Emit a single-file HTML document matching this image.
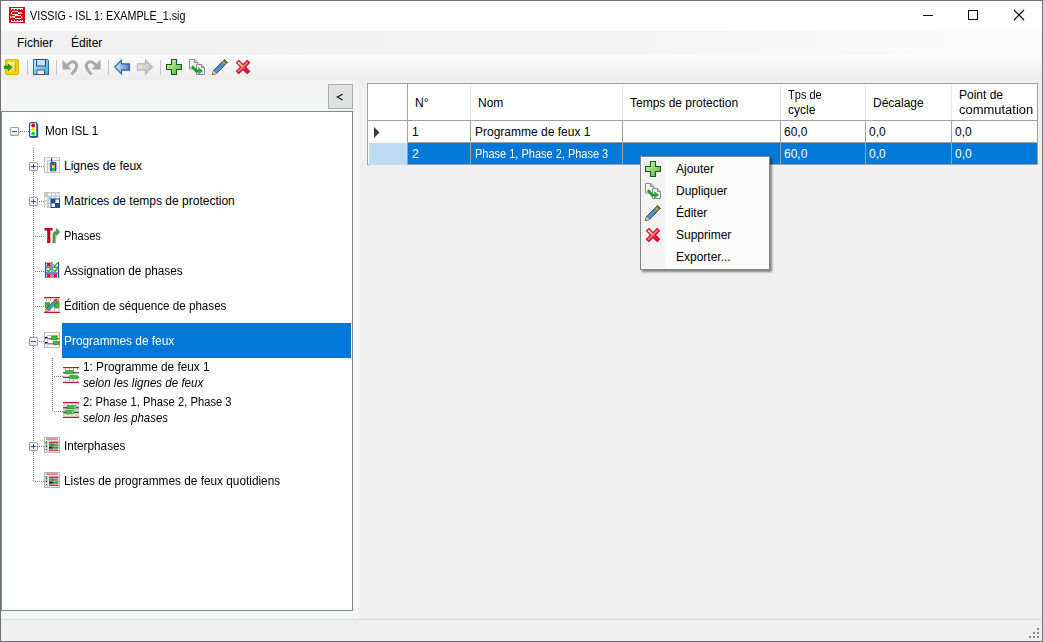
<!DOCTYPE html>
<html><head><meta charset="utf-8">
<style>
*{margin:0;padding:0;box-sizing:border-box}
html,body{width:1043px;height:642px;overflow:hidden;background:#f0f0f0}
body{position:relative;font-family:"Liberation Sans",sans-serif;font-size:12px;color:#000}
.a{position:absolute}
.t{position:absolute;white-space:nowrap;line-height:14px}
svg{position:absolute;overflow:visible}
#win{left:0;top:0;width:1043px;height:642px;border:1px solid #707070}
#title{left:1px;top:1px;width:1041px;height:30px;background:#fff}
#menu{left:1px;top:31px;width:1041px;height:24px;background:linear-gradient(to right,#f0f0f0,#f4f4f4 55%,#fbfbfb)}
#tool{left:1px;top:55px;width:1041px;height:25px;background:linear-gradient(#fbfbfb,#ededed)}
#leftbg{left:1px;top:80px;width:357px;height:539px;background:#f5f5f5}
#tree{left:1px;top:111px;width:352px;height:500px;background:#fff;border:1px solid #828790}
#status{left:1px;top:619px;width:1041px;height:22px;background:#f0f0f0;border-top:1px solid #dadada}
#btn{left:328px;top:84px;width:25px;height:25px;background:#e1e1e1;border:1px solid #adadad}
#grid{left:367px;top:83px;width:671px;height:82px;border:1px solid #a0a0a0;background:#fff}
.vd{position:absolute;width:1px;background:repeating-linear-gradient(to bottom,#7c7c7c 0 1px,transparent 1px 2px)}
.hd{position:absolute;height:1px;background:repeating-linear-gradient(to right,#7c7c7c 0 1px,transparent 1px 2px)}
.box{position:absolute;width:9px;height:9px;border:1px solid #a0a0a0;border-radius:1px;background:linear-gradient(#fff,#e6e6e6)}
.box:before{content:"";position:absolute;left:1px;top:3px;width:5px;height:1px;background:#3a56a0}
.box.p:after{content:"";position:absolute;left:3px;top:1px;width:1px;height:5px;background:#3a56a0}
.gl{position:absolute;background:#a0a0a0}
.hl{position:absolute;background:#e5e5e5}
.sel{color:#fff}
</style></head><body>
<div class="a" id="title"></div>
<div class="a" id="menu"></div>
<div class="a" id="tool"></div>
<div class="a" id="leftbg"></div>
<div class="a" id="tree"></div>
<div class="a" id="status"></div>
<div class="a" id="btn"></div>
<div class="a" id="grid"></div>


<svg width="0" height="0" style="position:absolute">
<defs>
<linearGradient id="pg" x1="0" y1="0" x2="1" y2="1"><stop offset="0" stop-color="#f0f8a0"/><stop offset="1" stop-color="#40b050"/></linearGradient>
<linearGradient id="xg" x1="0" y1="0" x2="1" y2="1"><stop offset="0" stop-color="#fff6f2"/><stop offset=".42" stop-color="#f4a8a0"/><stop offset=".6" stop-color="#e83040"/><stop offset="1" stop-color="#d4001c"/></linearGradient>
<linearGradient id="dupg" x1="0" y1="0" x2="0" y2="1"><stop offset="0" stop-color="#3cb43c"/><stop offset="1" stop-color="#138a22"/></linearGradient>
<symbol id="iplus" viewBox="0 0 16 16"><path d="M5.5 .5h5v5h5v5h-5v5h-5v-5h-5v-5h5z" fill="url(#pg)" stroke="#0c6414" stroke-width="1.1"/></symbol>
<symbol id="ix" viewBox="0 0 16 16"><path d="M1.5 3.8L3.8 1.5 8 5.7 12.2 1.5 14.5 3.8 10.3 8 14.5 12.2 12.2 14.5 8 10.3 3.8 14.5 1.5 12.2 5.7 8z" fill="url(#xg)" stroke="#d00020" stroke-width="1.1"/></symbol>
<symbol id="ipen" viewBox="0 0 16 16">
<path d="M12.6 .6l2.8 2.8L4.2 14.6 0.5 15.5 1.4 11.8z" fill="#3a98d8" stroke="#6a2a10" stroke-width="1"/>
<path d="M12.6 .6l2.8 2.8-1.4 1.4-2.8-2.8z" fill="#2f9a3a"/>
<path d="M11.2 2l2.8 2.8-1 1-2.8-2.8z" fill="#f09020"/>
<path d="M1.4 11.8l2.8 2.8-3.7.9z" fill="#f0d080"/>
<path d="M.5 15.5l1-.3-.7-.7z" fill="#3a1a00"/>
</symbol>
<symbol id="idup" viewBox="0 0 16 16">
<path d="M.5 .5h5.5l3 3v6.5H.5z" fill="#f2f2f2" stroke="#8a8a92" stroke-width="1"/>
<path d="M5.5 .5v3h3" fill="#c8c8d8" stroke="#8a8a92" stroke-width="1"/>
<path d="M7.5 5.5h5l3 3v7H7.5z" fill="#ececec" stroke="#8a8a92" stroke-width="1"/>
<path d="M12.5 5.5v3h3" fill="#c8c8d8" stroke="#8a8a92" stroke-width="1"/>
<path d="M3 7.2L7.2 12.2H10" stroke="#1f9a2a" stroke-width="2.8" fill="none"/>
<path d="M9.3 8.3L14 12 9.3 15.6z" fill="#2aa834"/>
</symbol>
</defs></svg>
<!-- title -->
<svg style="left:9px;top:7px" width="16" height="16" viewBox="0 0 16 16" shape-rendering="crispEdges">
<rect x="0" y="0" width="16" height="16" fill="#e0000e"/>
<g fill="#fff"><rect x="2" y="1" width="12" height="1"/><rect x="2" y="2" width="1" height="1"/><rect x="5" y="2" width="1" height="1"/><rect x="8" y="2" width="1" height="1"/><rect x="11" y="2" width="1" height="1"/><rect x="13" y="2" width="1" height="1"/>
<rect x="2" y="14" width="12" height="1"/><rect x="2" y="13" width="1" height="1"/><rect x="5" y="13" width="1" height="1"/><rect x="8" y="13" width="1" height="1"/><rect x="11" y="13" width="1" height="1"/><rect x="13" y="13" width="1" height="1"/></g>
<rect x="10" y="5" width="3" height="2" fill="#f4a8ac"/>
<rect x="1" y="9" width="4" height="2" fill="#f4a8ac"/>
<g fill="#fff"><rect x="3" y="4" width="6" height="1"/><rect x="3" y="7" width="6" height="1"/><rect x="2" y="5" width="1" height="2"/><rect x="9" y="5" width="1" height="2"/>
<rect x="6" y="8" width="6" height="1"/><rect x="6" y="11" width="6" height="1"/><rect x="5" y="9" width="1" height="2"/><rect x="12" y="9" width="1" height="2"/></g>
</svg>
<div class="t" style="left:30px;top:9px;transform:scaleX(.895);transform-origin:0 0">VISSIG - ISL 1: EXAMPLE_1.sig</div>
<!-- window controls -->
<div class="a" style="left:923px;top:15px;width:10px;height:1px;background:#000"></div>
<div class="a" style="left:968px;top:10px;width:10px;height:10px;border:1px solid #000"></div>
<svg style="left:1014px;top:10px" width="10" height="10" viewBox="0 0 10 10"><path d="M0 0L10 10M10 0L0 10" stroke="#000" stroke-width="1.1"/></svg>

<!-- menu -->
<div class="t" style="left:17px;top:36px">Fichier</div>
<div class="t" style="left:71px;top:36px">Éditer</div>


<!-- toolbar -->
<svg style="left:4px;top:59px" width="16" height="16" viewBox="0 0 16 16">
<defs><linearGradient id="dg" x1="0" y1="0" x2="1" y2="1"><stop offset="0" stop-color="#fffbe0"/><stop offset="1" stop-color="#f0c800"/></linearGradient>
<linearGradient id="ga" x1="0" y1="0" x2="0" y2="1"><stop offset="0" stop-color="#4cb84c"/><stop offset="1" stop-color="#0a7a1a"/></linearGradient></defs>
<rect x="1.5" y="0.5" width="13" height="15" rx="1.5" fill="#f7d300" stroke="#d8b400" stroke-width="1"/>
<rect x="4" y="3" width="7.5" height="9.7" fill="url(#dg)"/>
<rect x="11" y="3" width="1.2" height="9.7" fill="#b8a860"/>
<path d="M.3 7H4.4V4.9L8 8.3 4.4 11.7V9.6H.3z" fill="#1f9a2a" stroke="#0b6a18" stroke-width=".6"/>
</svg>
<div class="a" style="left:27px;top:60px;width:1px;height:15px;background:#c5c5c5"></div>
<svg style="left:33px;top:59px" width="16" height="16" viewBox="0 0 16 16">
<defs><linearGradient id="fl" x1="0" y1="0" x2="1" y2="1"><stop offset="0" stop-color="#d6f0fc"/><stop offset="1" stop-color="#2aa4e4"/></linearGradient></defs>
<path d="M.5 .5h14l1 1v14H.5z" fill="url(#fl)" stroke="#1b6fb8" stroke-width="1"/>
<rect x="3.5" y="0.5" width="9" height="6.5" fill="#c4e2f4" stroke="#1a4c94" stroke-width="1"/>
<rect x="4" y="11" width="7.5" height="4.5" fill="#e8eef0" stroke="#555" stroke-width="1"/>
<rect x="0.5" y="15" width="15" height="1" fill="#565656"/>
</svg>
<div class="a" style="left:56px;top:60px;width:1px;height:15px;background:#c5c5c5"></div>
<svg style="left:62px;top:59px" width="16" height="16" viewBox="0 0 16 16"><path d="M.5 .5V10.5H9.5Z" fill="#a9a9a9"/><path d="M4 7.5C6.5 3.5 10.5 1.5 13.2 3.6 15.8 5.8 15.2 9.5 9.5 15.5" fill="none" stroke="#a9a9a9" stroke-width="3"/></svg>
<svg style="left:85px;top:59px" width="16" height="16" viewBox="0 0 16 16"><g transform="translate(16 0) scale(-1 1)"><path d="M.5 .5V10.5H9.5Z" fill="#a9a9a9"/><path d="M4 7.5C6.5 3.5 10.5 1.5 13.2 3.6 15.8 5.8 15.2 9.5 9.5 15.5" fill="none" stroke="#a9a9a9" stroke-width="3"/></g></svg>
<div class="a" style="left:108px;top:60px;width:1px;height:15px;background:#c5c5c5"></div>
<svg style="left:114px;top:59px" width="16" height="16" viewBox="0 0 16 16">
<defs><linearGradient id="la" x1="0" y1="0" x2="1" y2="0"><stop offset="0" stop-color="#e8f0fa"/><stop offset="1" stop-color="#4a78c0"/></linearGradient></defs>
<path d="M.7 8L7.5 1v3.9h8v6.2h-8V15z" fill="url(#la)" stroke="#2a62a4" stroke-width="1.1" stroke-linejoin="miter"/>
</svg>
<svg style="left:137px;top:59px" width="16" height="16" viewBox="0 0 16 16">
<defs><linearGradient id="ra" x1="0" y1="0" x2="1" y2="0"><stop offset="0" stop-color="#e6e6e6"/><stop offset="1" stop-color="#c4c4c4"/></linearGradient></defs>
<path d="M15.3 8L8.5 1v3.9h-8v6.2h8V15z" fill="url(#ra)" stroke="#b4b4b4" stroke-width="1.1"/>
</svg>
<div class="a" style="left:160px;top:60px;width:1px;height:15px;background:#c5c5c5"></div>
<svg style="left:166px;top:59px" width="16" height="16"><use href="#iplus"/></svg>
<svg style="left:189px;top:59px" width="16" height="16"><use href="#idup"/></svg>
<svg style="left:212px;top:59px" width="16" height="16"><use href="#ipen"/></svg>
<svg style="left:235px;top:59px" width="16" height="16"><use href="#ix"/></svg>


<!-- tree -->
<div class="box" style="left:10px;top:127px"></div>
<div class="hd" style="left:20px;top:131px;width:9px"></div>
<svg style="left:29px;top:122px" width="9" height="16" viewBox="0 0 9 16">
<rect x=".6" y=".6" width="7.4" height="14.6" rx="1.5" fill="#fff" stroke="#1b4f9c" stroke-width="1.2"/>
<path d="M1.5 14.8h7V2" fill="none" stroke="#1b4f9c" stroke-width="1.4"/>
<circle cx="4.2" cy="3.5" r="1.9" fill="#e8000e"/><circle cx="4.2" cy="7.6" r="1.9" fill="#ffe000"/><circle cx="4.2" cy="11.7" r="1.9" fill="#00d21e"/>
</svg>
<div class="t" style="left:45px;top:124px;transform:scaleX(.98);transform-origin:0 0">Mon ISL 1</div>
<div class="vd" style="left:33px;top:148px;height:333px"></div>

<div class="box p" style="left:29px;top:162px"></div>
<div class="hd" style="left:39px;top:166px;width:5px"></div>
<svg style="left:44px;top:157px" width="16" height="16" viewBox="0 0 16 16">
<rect x=".5" y=".5" width="15" height="15" fill="#f4f6fa" stroke="#c4c4c8"/>
<path d="M3.5 15.5V3.5h12" fill="none" stroke="#c4c4c8"/>
<rect x="7" y="1" width="1.2" height="3" fill="#1b4f9c"/>
<rect x="7" y="4" width="2" height="1" fill="#6a8cc0"/>
<rect x="5.8" y="5" width="6.6" height="9.2" rx="1" fill="#1b4f9c"/>
<rect x="6.3" y="5.5" width="1" height="8" fill="#5a84c8"/>
<rect x="8" y="6" width="2.4" height="7.4" fill="#fff"/>
<circle cx="9.2" cy="7.3" r="1.25" fill="#e8000e"/><circle cx="9.2" cy="9.7" r="1.25" fill="#ffe800"/><circle cx="9.2" cy="12.1" r="1.25" fill="#00d21e"/>
</svg>
<div class="t" style="left:64px;top:159px">Lignes de feux</div>

<div class="box p" style="left:29px;top:197px"></div>
<div class="hd" style="left:39px;top:201px;width:5px"></div>
<svg style="left:44px;top:192px" width="16" height="16" viewBox="0 0 16 16">
<rect x="0" y="0" width="16" height="16" fill="#c8c8c8"/>
<g fill="#fff"><rect x="4" y="1.5" width="3" height="2"/><rect x="8" y="1.5" width="3" height="2"/><rect x="12" y="1.5" width="3" height="2"/>
<rect x="1" y="5" width="2" height="3"/><rect x="1" y="9" width="2" height="3"/><rect x="1" y="13" width="2" height="3"/></g>
<rect x="4" y="4" width="12" height="12" fill="#b4cce8"/>
<g fill="#fff"><rect x="8" y="5" width="3" height="1.5"/><rect x="12" y="5" width="3" height="1.5"/><rect x="5" y="8" width="1.5" height="3"/><rect x="5" y="12" width="1.5" height="3"/></g>
<rect x="6.5" y="6.5" width="9.5" height="9.5" fill="#1a4f98"/>
<rect x="7.5" y="11.5" width="3.5" height="3.5" fill="#fff"/><rect x="11.5" y="7.5" width="3.5" height="3.5" fill="#fff"/>
</svg>
<div class="t" style="left:64px;top:194px">Matrices de temps de protection</div>

<div class="hd" style="left:35px;top:236px;width:9px"></div>
<svg style="left:44px;top:227px" width="16" height="16" viewBox="0 0 16 16">
<path d="M.5 1h8v2.6H6V16H3.2V3.6H.5z" fill="#c8001e"/><path d="M6 3.6V16" stroke="#7a0010" stroke-width=".6"/>
<path d="M8.8 16V8.2C8.8 5.6 10.2 4.2 12.2 4.2V1L16 4.9 12.2 8.8V6.9C11.6 6.9 11.3 7.4 11.3 8.2V16z" fill="#48a834" stroke="#4a4a8a" stroke-width=".35"/>
</svg>
<div class="t" style="left:64px;top:229px;transform:scaleX(.92);transform-origin:0 0">Phases</div>

<div class="hd" style="left:35px;top:271px;width:9px"></div>
<svg style="left:44px;top:262px" width="16" height="16" viewBox="0 0 16 16">
<g fill="#4a7ec8"><rect x="1" y="4.6" width="14" height="1.6"/><rect x="1" y="10.2" width="14" height="1.6"/></g>
<rect x="7.2" y="0" width="1.6" height="16" fill="#5a8ed0"/>
<rect x="1" y="0" width="1.3" height="16" fill="#2460b0"/><rect x="13.9" y="0" width="1.3" height="16" fill="#2460b0"/>
<g stroke="#d8001e" stroke-width="1.9"><path d="M3.2 .8l3.2 3.2M6.4 .8L3.2 4M3.2 12.2l3.2 3.2M6.4 12.2L3.2 15.4M9.6 12.2l3.2 3.2M12.8 12.2L9.6 15.4"/></g>
<g stroke="#3aa82a" stroke-width="1.5" fill="none"><path d="M9.3 2.6l1.5 1.6L13.6.6M3 8l1.5 1.6L7.3 6.2M9.3 8l1.5 1.6L13.6 6.2"/></g>
</svg>
<div class="t" style="left:64px;top:264px;transform:scaleX(.983);transform-origin:0 0">Assignation de phases</div>

<div class="hd" style="left:35px;top:306px;width:9px"></div>
<svg style="left:44px;top:297px" width="16" height="16" viewBox="0 0 16 16">
<rect x="0" y="0" width="16" height="1.3" fill="#d0102a"/><rect x="0" y="14.7" width="16" height="1.3" fill="#d0102a"/>
<g fill="#9a9a9a"><rect x="2" y="2" width="1" height="1.5"/><rect x="6" y="2" width="1" height="1.5"/><rect x="10" y="2" width="1" height="1.5"/><rect x="14" y="2" width="1" height="1.5"/><rect x="2" y="12.5" width="1" height="1.5"/><rect x="6" y="12.5" width="1" height="1.5"/><rect x="10" y="12.5" width="1" height="1.5"/><rect x="14" y="12.5" width="1" height="1.5"/></g>
<rect x="1" y="5" width="5" height="6.5" fill="#40b030"/><rect x="10" y="4.5" width="5.5" height="7" fill="#40b030"/>
<path d="M12.2 1.8l2.2 2.2L4.4 14 1.6 14.6 2.2 11.8z" fill="#3a98d8" stroke="#6a3a10" stroke-width=".8"/>
<path d="M12.2 1.8l2.2 2.2-1.5 1.5-2.2-2.2z" fill="#e06020"/><path d="M2.2 11.8l2.2 2.2-2.8.6z" fill="#f0c860"/>
</svg>
<div class="t" style="left:64px;top:299px;transform:scaleX(.97);transform-origin:0 0">Édition de séquence de phases</div>

<div class="box" style="left:29px;top:337px"></div>
<div class="hd" style="left:39px;top:341px;width:5px"></div>
<svg style="left:44px;top:332px" width="16" height="16" viewBox="0 0 16 16">
<rect x=".5" y=".5" width="15" height="15" fill="#fff" stroke="#b8b8b8"/>
<path d="M3.5 15.5V3.5h12" fill="none" stroke="#b8b8b8"/>
<rect x="1" y="4" width="2.5" height="11" fill="#e0ecf8"/>
<rect x="1" y="5" width="2.5" height="1.5" fill="#111"/><rect x="1" y="10" width="2.5" height="1.5" fill="#111"/>
<rect x="4" y="6" width="11" height="1.5" fill="#808080"/><rect x="4" y="11" width="11" height="1.5" fill="#808080"/>
<rect x="7.3" y="4.3" width="6" height="3.4" rx=".4" fill="#46b83a" stroke="#168a1a" stroke-width=".7"/>
<rect x="9.3" y="9.3" width="6" height="3.4" rx=".4" fill="#46b83a" stroke="#168a1a" stroke-width=".7"/>
</svg>
<div class="a" style="left:62px;top:323px;width:289px;height:35px;background:#0078d7"></div>
<div class="t sel" style="left:64px;top:334px;transform:scaleX(.99);transform-origin:0 0">Programmes de feux</div>

<div class="vd" style="left:52px;top:358px;height:54px"></div>
<div class="hd" style="left:54px;top:376px;width:9px"></div>
<div class="hd" style="left:54px;top:411px;width:9px"></div>
<svg style="left:63px;top:367px" width="16" height="16" viewBox="0 0 16 16" id="sub1">
<rect x="0" y="0" width="16" height="1.2" fill="#d0102a"/><rect x="0" y="14.8" width="16" height="1.2" fill="#d0102a"/>
<g fill="#a0a0a0"><rect x="2" y="1.5" width="1" height="1.5"/><rect x="6" y="1.5" width="1" height="1.5"/><rect x="10" y="1.5" width="1" height="1.5"/><rect x="14" y="1.5" width="1" height="1.5"/><rect x="2" y="13" width="1" height="1.5"/><rect x="6" y="13" width="1" height="1.5"/><rect x="10" y="13" width="1" height="1.5"/><rect x="14" y="13" width="1" height="1.5"/></g>
<rect x="0" y="5.3" width="16" height="1" fill="#202020"/><rect x="0" y="9.8" width="16" height="1" fill="#202020"/>
<rect x="2.3" y="3.6" width="8.6" height="3.2" rx=".3" fill="#46b83a" stroke="#1a8a1a" stroke-width=".6"/>
<rect x="6.3" y="8.6" width="8.6" height="3.2" rx=".3" fill="#46b83a" stroke="#1a8a1a" stroke-width=".6"/>
</svg>
<div class="t" style="left:83px;top:360px;transform:scaleX(.983);transform-origin:0 0">1: Programme de feux 1</div>
<div class="t" style="left:83px;top:376px;font-style:italic;transform:scaleX(.964);transform-origin:0 0">selon les lignes de feux</div>
<svg style="left:63px;top:402px" width="16" height="16" viewBox="0 0 16 16">
<rect x="0" y="1.5" width="16" height="13" fill="#d4d4d4"/>
<rect x="0" y="0" width="16" height="1.2" fill="#d0102a"/><rect x="0" y="14.8" width="16" height="1.2" fill="#d0102a"/>
<g fill="#fff"><rect x="2" y="2" width="1.5" height="1.5"/><rect x="6" y="2" width="1.5" height="1.5"/><rect x="10" y="2" width="1.5" height="1.5"/><rect x="2" y="12.5" width="1.5" height="1.5"/><rect x="6" y="12.5" width="1.5" height="1.5"/><rect x="10" y="12.5" width="1.5" height="1.5"/></g>
<rect x="0" y="5.3" width="16" height="1" fill="#202020"/><rect x="0" y="9.8" width="16" height="1" fill="#202020"/>
<rect x="4.3" y="3.6" width="8.6" height="3.2" rx=".3" fill="#46b83a" stroke="#1a8a1a" stroke-width=".6"/>
<rect x="2.3" y="8.6" width="8.6" height="3.2" rx=".3" fill="#46b83a" stroke="#1a8a1a" stroke-width=".6"/>
<rect x="11" y="3.8" width="2" height="2.8" fill="#8ac880"/><rect x="9" y="8.8" width="2" height="2.8" fill="#8ac880"/>
</svg>
<div class="t" style="left:83px;top:395px;transform:scaleX(.936);transform-origin:0 0">2: Phase 1, Phase 2, Phase 3</div>
<div class="t" style="left:83px;top:411px;font-style:italic;transform:scaleX(.95);transform-origin:0 0">selon les phases</div>

<div class="box p" style="left:29px;top:442px"></div>
<div class="hd" style="left:39px;top:446px;width:5px"></div>
<svg style="left:44px;top:437px" width="16" height="16" viewBox="0 0 16 16">
<rect x=".5" y=".5" width="15" height="15" fill="#f6fafd" stroke="#b4b4b4"/>
<path d="M3.5 15V3.5H15" fill="none" stroke="#dcdcdc"/>
<rect x="2" y="1.4" width="12" height="1.3" fill="#e0506a"/>
<rect x="1.6" y="4" width="1.5" height="3.6" fill="#34a030"/><rect x="1.6" y="8.6" width="1.5" height="1.6" fill="#202020"/><rect x="1.6" y="12" width="1.5" height="1.2" fill="#d0102a"/>
<rect x="5" y="4.6" width="9.5" height="1.3" fill="#d0102a"/>
<rect x="5" y="6.4" width="5" height="2.5" fill="#2a9a2a"/><rect x="10" y="6.4" width="4.5" height="2.5" fill="#888"/>
<rect x="5" y="9.4" width="3.8" height="2.4" fill="#202020"/><rect x="8.8" y="9.4" width="5.7" height="2.4" fill="#2aa02a"/>
<rect x="5" y="12.6" width="9.5" height="1.3" fill="#d0102a"/>
</svg>
<div class="t" style="left:64px;top:439px;transform:scaleX(.98);transform-origin:0 0">Interphases</div>

<div class="hd" style="left:35px;top:481px;width:9px"></div>
<svg style="left:44px;top:472px" width="16" height="16" viewBox="0 0 16 16">
<rect x=".5" y=".5" width="15" height="15" fill="#f6fafd" stroke="#b4b4b4"/>
<path d="M3.5 15V3.5H15" fill="none" stroke="#dcdcdc"/>
<rect x="2" y="1.4" width="12" height="1.3" fill="#e0506a"/>
<rect x="1.6" y="4" width="1.5" height="3.6" fill="#34a030"/><rect x="1.6" y="8.6" width="1.5" height="1.6" fill="#202020"/><rect x="1.6" y="12" width="1.5" height="1.2" fill="#d0102a"/>
<rect x="5" y="4.6" width="9.5" height="1.3" fill="#d0102a"/>
<rect x="5" y="6.4" width="5" height="2.5" fill="#2a9a2a"/><rect x="10" y="6.4" width="4.5" height="2.5" fill="#888"/>
<rect x="5" y="9.4" width="3.8" height="2.4" fill="#202020"/><rect x="8.8" y="9.4" width="5.7" height="2.4" fill="#2aa02a"/>
<rect x="5" y="12.6" width="9.5" height="1.3" fill="#d0102a"/>
</svg>
<div class="t" style="left:64px;top:474px;transform:scaleX(.985);transform-origin:0 0">Listes de programmes de feux quotidiens</div>


<!-- grid -->
<div class="a" style="left:368px;top:84px;width:669px;height:36px;background:#fff"></div>
<div class="a" style="left:368px;top:121px;width:39px;height:21px;background:#fff"></div>
<div class="a" style="left:369px;top:143px;width:38px;height:22px;background:#bcdbf3"></div>
<div class="a" style="left:408px;top:121px;width:629px;height:21px;background:#fff"></div>
<div class="a" style="left:408px;top:143px;width:629px;height:21px;background:#0078d7"></div>
<div class="gl" style="left:367px;top:83px;width:671px;height:1px"></div>
<div class="gl" style="left:367px;top:83px;width:1px;height:82px"></div>
<div class="gl" style="left:1037px;top:83px;width:1px;height:82px"></div>
<div class="gl" style="left:367px;top:120px;width:671px;height:1px"></div>
<div class="gl" style="left:408px;top:142px;width:630px;height:1px"></div>
<div class="gl" style="left:408px;top:164px;width:630px;height:1px"></div>
<div class="gl" style="left:407px;top:83px;width:1px;height:82px"></div>
<div class="hl" style="left:470px;top:85px;width:1px;height:35px"></div>
<div class="hl" style="left:622px;top:85px;width:1px;height:35px"></div>
<div class="hl" style="left:780px;top:85px;width:1px;height:35px"></div>
<div class="hl" style="left:865px;top:85px;width:1px;height:35px"></div>
<div class="hl" style="left:951px;top:85px;width:1px;height:35px"></div>
<div class="gl" style="left:470px;top:121px;width:1px;height:44px"></div>
<div class="gl" style="left:622px;top:121px;width:1px;height:44px"></div>
<div class="gl" style="left:780px;top:121px;width:1px;height:44px"></div>
<div class="gl" style="left:865px;top:121px;width:1px;height:44px"></div>
<div class="gl" style="left:951px;top:121px;width:1px;height:44px"></div>
<svg style="left:374px;top:127px" width="6" height="11" viewBox="0 0 6 11"><path d="M0 0L5.5 5.5 0 11z" fill="#3c3c3c"/></svg>
<div class="t" style="left:415px;top:96px">N°</div>
<div class="t" style="left:478px;top:96px">Nom</div>
<div class="t" style="left:630px;top:96px">Temps de protection</div>
<div class="t" style="left:788px;top:88px;transform:scaleX(.92);transform-origin:0 0">Tps de</div>
<div class="t" style="left:788px;top:103px">cycle</div>
<div class="t" style="left:873px;top:96px">Décalage</div>
<div class="t" style="left:959px;top:88px">Point de</div>
<div class="t" style="left:959px;top:103px;transform:scaleX(1.08);transform-origin:0 0">commutation</div>
<div class="t" style="left:412px;top:125px">1</div>
<div class="t" style="left:475px;top:125px">Programme de feux 1</div>
<div class="t" style="left:784px;top:125px">60,0</div>
<div class="t" style="left:869px;top:125px">0,0</div>
<div class="t" style="left:955px;top:125px">0,0</div>
<div class="t sel" style="left:412px;top:147px">2</div>
<div class="t sel" style="left:475px;top:147px;transform:scaleX(.916);transform-origin:0 0">Phase 1, Phase 2, Phase 3</div>
<div class="t sel" style="left:784px;top:147px">60,0</div>
<div class="t sel" style="left:869px;top:147px">0,0</div>
<div class="t sel" style="left:955px;top:147px">0,0</div>
<svg style="left:336px;top:93px" width="8" height="8" viewBox="0 0 8 8"><path d="M6.6 1.2L1.3 4 6.6 6.9" fill="none" stroke="#111" stroke-width="1.15"/></svg>

<!-- context menu -->
<div class="a" style="left:642px;top:158px;width:130px;height:114px;background:rgba(0,0,0,.45);filter:blur(1.2px)"></div>
<div class="a" style="left:640px;top:156px;width:130px;height:114px;background:#fcfcfc;border:1px solid #858585"></div>
<div class="a" style="left:642px;top:158px;width:23px;height:110px;background:#f3f3f3"></div>
<svg style="left:645px;top:161px" width="16" height="16"><use href="#iplus"/></svg>
<svg style="left:645px;top:183px" width="16" height="16"><use href="#idup"/></svg>
<svg style="left:645px;top:205px" width="16" height="16"><use href="#ipen"/></svg>
<svg style="left:645px;top:227px" width="16" height="16"><use href="#ix"/></svg>
<div class="t" style="left:676px;top:162px">Ajouter</div>
<div class="t" style="left:676px;top:184px">Dupliquer</div>
<div class="t" style="left:676px;top:206px">Éditer</div>
<div class="t" style="left:676px;top:228px">Supprimer</div>
<div class="t" style="left:676px;top:250px">Exporter...</div>

<!-- grip -->
<div class="a" style="left:1037px;top:628px;width:2px;height:2px;background:#8c8c8c"></div>
<div class="a" style="left:1033px;top:632px;width:2px;height:2px;background:#8c8c8c"></div>
<div class="a" style="left:1037px;top:632px;width:2px;height:2px;background:#8c8c8c"></div>
<div class="a" style="left:1029px;top:636px;width:2px;height:2px;background:#8c8c8c"></div>
<div class="a" style="left:1033px;top:636px;width:2px;height:2px;background:#8c8c8c"></div>
<div class="a" style="left:1037px;top:636px;width:2px;height:2px;background:#8c8c8c"></div>

<div class="a" id="win"></div>
</body></html>
